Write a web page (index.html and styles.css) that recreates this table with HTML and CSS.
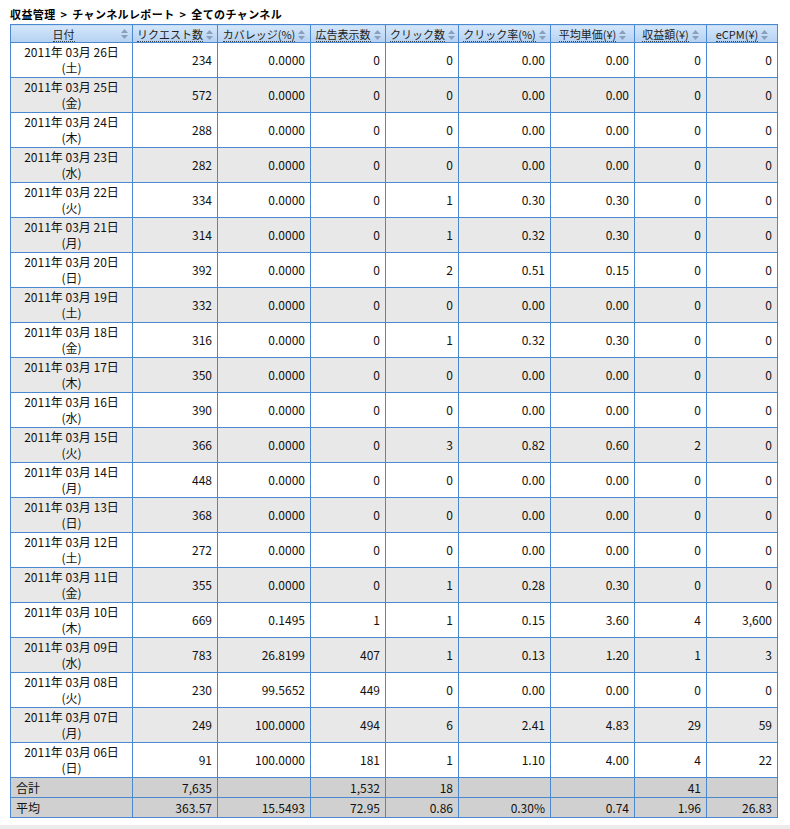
FILE: index.html
```html
<!DOCTYPE html>
<html lang="ja">
<head>
<meta charset="utf-8">
<title>チャンネルレポート</title>
<link rel="stylesheet" href="styles.css">
</head>
<body>
<div class="page">
  <h1 class="crumb">収益管理 &gt; チャンネルレポート &gt; 全てのチャンネル</h1>
  <table class="report">
    <colgroup>
      <col class="c-date"><col class="c-req"><col class="c-cov"><col class="c-imp"><col class="c-clk"><col class="c-ctr"><col class="c-cpc"><col class="c-rev"><col class="c-ecpm">
    </colgroup>
    <thead>
      <tr>
        <th class="th-date"><span class="lab">日付</span><svg class="sort" viewBox="0 0 7 10"><polygon points="0,4 3.5,0 7,4"/><polygon points="0,6 3.5,10 7,6"/></svg></th>
        <th><span class="lab">リクエスト数</span><svg class="sort" viewBox="0 0 7 10"><polygon points="0,4 3.5,0 7,4"/><polygon points="0,6 3.5,10 7,6"/></svg></th>
        <th><span class="lab">カバレッジ(%)</span><svg class="sort" viewBox="0 0 7 10"><polygon points="0,4 3.5,0 7,4"/><polygon points="0,6 3.5,10 7,6"/></svg></th>
        <th><span class="lab">広告表示数</span><svg class="sort" viewBox="0 0 7 10"><polygon points="0,4 3.5,0 7,4"/><polygon points="0,6 3.5,10 7,6"/></svg></th>
        <th><span class="lab">クリック数</span><svg class="sort" viewBox="0 0 7 10"><polygon points="0,4 3.5,0 7,4"/><polygon points="0,6 3.5,10 7,6"/></svg></th>
        <th><span class="lab">クリック率(%)</span><svg class="sort" viewBox="0 0 7 10"><polygon points="0,4 3.5,0 7,4"/><polygon points="0,6 3.5,10 7,6"/></svg></th>
        <th><span class="lab">平均単価(¥)</span><svg class="sort" viewBox="0 0 7 10"><polygon points="0,4 3.5,0 7,4"/><polygon points="0,6 3.5,10 7,6"/></svg></th>
        <th><span class="lab">収益額(¥)</span><svg class="sort" viewBox="0 0 7 10"><polygon points="0,4 3.5,0 7,4"/><polygon points="0,6 3.5,10 7,6"/></svg></th>
        <th><span class="lab">eCPM(¥)</span><svg class="sort" viewBox="0 0 7 10"><polygon points="0,4 3.5,0 7,4"/><polygon points="0,6 3.5,10 7,6"/></svg></th>
      </tr>
    </thead>
    <tbody>
      <tr class="odd"><td class="date">2011年 03月 26日<br>(土)</td><td>234</td><td>0.0000</td><td>0</td><td>0</td><td>0.00</td><td>0.00</td><td>0</td><td>0</td></tr>
      <tr class="even"><td class="date">2011年 03月 25日<br>(金)</td><td>572</td><td>0.0000</td><td>0</td><td>0</td><td>0.00</td><td>0.00</td><td>0</td><td>0</td></tr>
      <tr class="odd"><td class="date">2011年 03月 24日<br>(木)</td><td>288</td><td>0.0000</td><td>0</td><td>0</td><td>0.00</td><td>0.00</td><td>0</td><td>0</td></tr>
      <tr class="even"><td class="date">2011年 03月 23日<br>(水)</td><td>282</td><td>0.0000</td><td>0</td><td>0</td><td>0.00</td><td>0.00</td><td>0</td><td>0</td></tr>
      <tr class="odd"><td class="date">2011年 03月 22日<br>(火)</td><td>334</td><td>0.0000</td><td>0</td><td>1</td><td>0.30</td><td>0.30</td><td>0</td><td>0</td></tr>
      <tr class="even"><td class="date">2011年 03月 21日<br>(月)</td><td>314</td><td>0.0000</td><td>0</td><td>1</td><td>0.32</td><td>0.30</td><td>0</td><td>0</td></tr>
      <tr class="odd"><td class="date">2011年 03月 20日<br>(日)</td><td>392</td><td>0.0000</td><td>0</td><td>2</td><td>0.51</td><td>0.15</td><td>0</td><td>0</td></tr>
      <tr class="even"><td class="date">2011年 03月 19日<br>(土)</td><td>332</td><td>0.0000</td><td>0</td><td>0</td><td>0.00</td><td>0.00</td><td>0</td><td>0</td></tr>
      <tr class="odd"><td class="date">2011年 03月 18日<br>(金)</td><td>316</td><td>0.0000</td><td>0</td><td>1</td><td>0.32</td><td>0.30</td><td>0</td><td>0</td></tr>
      <tr class="even"><td class="date">2011年 03月 17日<br>(木)</td><td>350</td><td>0.0000</td><td>0</td><td>0</td><td>0.00</td><td>0.00</td><td>0</td><td>0</td></tr>
      <tr class="odd"><td class="date">2011年 03月 16日<br>(水)</td><td>390</td><td>0.0000</td><td>0</td><td>0</td><td>0.00</td><td>0.00</td><td>0</td><td>0</td></tr>
      <tr class="even"><td class="date">2011年 03月 15日<br>(火)</td><td>366</td><td>0.0000</td><td>0</td><td>3</td><td>0.82</td><td>0.60</td><td>2</td><td>0</td></tr>
      <tr class="odd"><td class="date">2011年 03月 14日<br>(月)</td><td>448</td><td>0.0000</td><td>0</td><td>0</td><td>0.00</td><td>0.00</td><td>0</td><td>0</td></tr>
      <tr class="even"><td class="date">2011年 03月 13日<br>(日)</td><td>368</td><td>0.0000</td><td>0</td><td>0</td><td>0.00</td><td>0.00</td><td>0</td><td>0</td></tr>
      <tr class="odd"><td class="date">2011年 03月 12日<br>(土)</td><td>272</td><td>0.0000</td><td>0</td><td>0</td><td>0.00</td><td>0.00</td><td>0</td><td>0</td></tr>
      <tr class="even"><td class="date">2011年 03月 11日<br>(金)</td><td>355</td><td>0.0000</td><td>0</td><td>1</td><td>0.28</td><td>0.30</td><td>0</td><td>0</td></tr>
      <tr class="odd"><td class="date">2011年 03月 10日<br>(木)</td><td>669</td><td>0.1495</td><td>1</td><td>1</td><td>0.15</td><td>3.60</td><td>4</td><td>3,600</td></tr>
      <tr class="even"><td class="date">2011年 03月 09日<br>(水)</td><td>783</td><td>26.8199</td><td>407</td><td>1</td><td>0.13</td><td>1.20</td><td>1</td><td>3</td></tr>
      <tr class="odd"><td class="date">2011年 03月 08日<br>(火)</td><td>230</td><td>99.5652</td><td>449</td><td>0</td><td>0.00</td><td>0.00</td><td>0</td><td>0</td></tr>
      <tr class="even"><td class="date">2011年 03月 07日<br>(月)</td><td>249</td><td>100.0000</td><td>494</td><td>6</td><td>2.41</td><td>4.83</td><td>29</td><td>59</td></tr>
      <tr class="odd"><td class="date">2011年 03月 06日<br>(日)</td><td>91</td><td>100.0000</td><td>181</td><td>1</td><td>1.10</td><td>4.00</td><td>4</td><td>22</td></tr>
    </tbody>
    <tfoot>
      <tr class="sum"><td class="label">合計</td><td>7,635</td><td></td><td>1,532</td><td>18</td><td></td><td></td><td>41</td><td></td></tr>
      <tr class="sum"><td class="label">平均</td><td>363.57</td><td>15.5493</td><td>72.95</td><td>0.86</td><td>0.30%</td><td>0.74</td><td>1.96</td><td>26.83</td></tr>
    </tfoot>
  </table>
</div>
<div class="footer-bar"></div>
</body>
</html>
```

FILE: styles.css
```css
html, body {
  margin: 0;
  padding: 0;
  background: #ffffff;
}
body {
  font-family: "Noto Sans CJK JP", "Liberation Sans", sans-serif;
  font-size: 12px;
  color: #111111;
}
.page {
  padding: 6px 10px 0 10px;
}
.crumb {
  margin: 0;
  font-size: 11px;
  line-height: 17px;
  font-weight: bold;
  letter-spacing: 0.4px;
  word-spacing: 2px;
  color: #000000;
  height: 18px;
}
.report {
  border-collapse: collapse;
  table-layout: fixed;
  width: 767px;
}
.c-date { width: 122px; }
.c-req { width: 85px; }
.c-cov { width: 93px; }
.c-imp { width: 75px; }
.c-clk { width: 73px; }
.c-ctr { width: 92px; }
.c-cpc { width: 84px; }
.c-rev { width: 72px; }
.c-ecpm { width: 71px; }

.report th, .report td {
  border: 1px solid #4a88cf;
}
.report thead tr {
  height: 18px;
}
.report th {
  background: linear-gradient(to bottom, #d5e7fa 0%, #c4dcf6 50%, #b5d1f1 100%);
  font-weight: normal;
  font-size: 11px;
  line-height: 14px;
  padding: 0 4px 0 4px;
  color: #222222;
  white-space: nowrap;
  overflow: hidden;
  text-align: center;
}
.lab {
  display: inline-block;
  border-bottom: 1px dotted #444444;
  line-height: 13px;
  vertical-align: middle;
  margin-right: 3px;
}
.sort {
  width: 7px;
  height: 10px;
  vertical-align: middle;
  fill: #8a9fbc;
}
.report th.th-date {
  position: relative;
  padding-right: 20px;
}
.th-date .lab {
  margin-right: 0;
}
.th-date .sort {
  position: absolute;
  right: 4px;
  top: 4px;
}

.report tbody tr {
  height: 35px;
}
.report td {
  text-align: right;
  padding: 0 5px 0 4px;
  line-height: 16px;
  vertical-align: middle;
  white-space: nowrap;
}
.report td.date {
  text-align: center;
  padding: 1px 4px;
}
.odd td { background: #ffffff; }
.even td { background: #e8e8e8; }

.report tfoot tr {
  height: 20px;
}
.sum td {
  background: #d0d0d0;
  line-height: 16px;
}
.sum td.label {
  text-align: left;
  padding-left: 5px;
}
.footer-bar {
  margin-top: 7px;
  height: 12px;
  background: #ececec;
}
```
